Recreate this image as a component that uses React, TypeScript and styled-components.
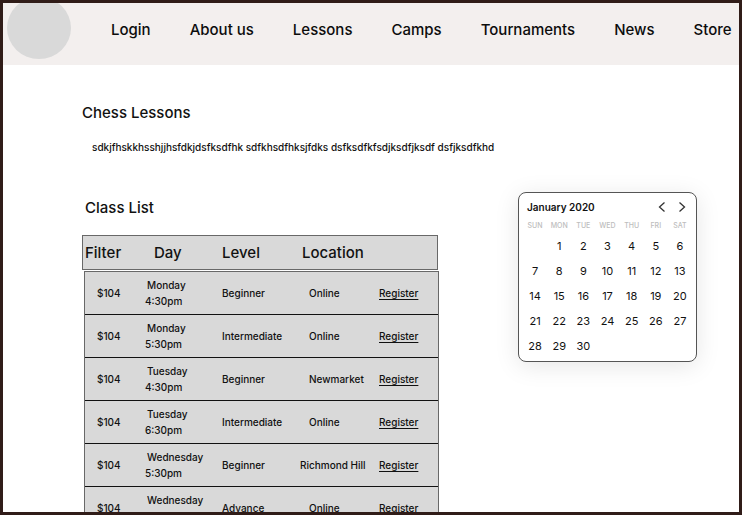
import React from "react";
import styled, { createGlobalStyle } from "styled-components";

const GlobalStyle = createGlobalStyle`
  *, *::before, *::after { box-sizing: border-box; }
  body {
    margin: 0;
    background: #fff;
    color: #111;
    font-family: Inter, "Liberation Sans", sans-serif;
    font-size: 10px;
    font-weight: 500;
    line-height: 16px;
  }
`;

const Page = styled.div`
  height: 100vh;
  overflow: hidden;
  border: 3px solid #301c18;
  background: #fff;
`;

const NavBar = styled.header`
  display: flex;
  align-items: center;
  height: 62px;
  padding-left: 4px;
  overflow: hidden;
  background: #f3efee;
`;

const Logo = styled.a`
  flex: none;
  width: 64px;
  height: 62px;
  margin: 0 40px 12px 0;
  border-radius: 50%;
  background: #d9d9d9;
`;

const NavLinks = styled.nav`
  display: flex;
  gap: 39px;
  margin-bottom: 8px;
`;

const NavLink = styled.a`
  color: #0c0c0c;
  font-size: 15px;
  line-height: 20px;
  white-space: nowrap;
  text-decoration: none;
`;

const Main = styled.main`
  padding: 38px 42px 0 79px;
`;

const Title = styled.h1`
  margin: 0;
  font-size: 15px;
  font-weight: 500;
  line-height: 20px;
`;

const Intro = styled.p`
  margin: 16px 0 0 10px;
`;

const Columns = styled.div`
  display: flex;
  justify-content: space-between;
  align-items: flex-start;
  margin-top: 37px;
`;

const ClassSection = styled.section`
  flex: 0 1 357px;
  padding-top: 6px;
`;

const SectionTitle = styled(Title).attrs({ as: "h2" })`
  margin-left: 3px;
`;

const ClassTable = styled.table`
  display: block;
  margin-top: 17px;
`;

const TableHead = styled.thead`
  display: block;
  margin-right: 1px;
  border: 1px solid #686868;
  background: #d9d9d9;
`;

const TableBody = styled.tbody`
  display: block;
  margin: 1px 0 0 2px;
  border: 1px solid #686868;
  background: #d9d9d9;
`;

const HeadRow = styled.tr`
  display: grid;
  grid-template-columns: 69px 68px 80px 1fr;
  align-items: center;
  height: 33px;
  padding-left: 2px;
`;

const HeadCell = styled.th`
  padding: 0;
  font-size: 15px;
  font-weight: 500;
  line-height: 20px;
  text-align: left;
`;

const ClassRow = styled.tr`
  display: grid;
  grid-template-columns: 48px 77px 78px 79px 1fr;
  align-items: center;
  height: 43px;
  padding-left: 12px;
  border-bottom: 1px solid #111;
`;

const Cell = styled.td<{ $wide?: boolean }>`
  padding: 0 0 0 ${(p) => (p.$wide ? 0 : 9)}px;
  white-space: nowrap;
`;

const PlainCell = styled.td`
  padding: 0;
`;

const DayName = styled.div`
  padding-left: 2px;
`;

const RegisterLink = styled.a`
  color: inherit;
  text-decoration: underline;
  text-decoration-skip-ink: none;
  text-underline-offset: 2px;
`;

const CalendarCard = styled.section`
  flex: none;
  width: 179px;
  padding: 5px 4px 2px;
  border: 1px solid #555;
  border-radius: 8px;
  background: #fff;
  box-shadow: 0 4px 24px rgba(0, 0, 0, 0.1);
`;

const CalendarHeader = styled.div`
  display: flex;
  align-items: center;
  height: 18px;
  padding: 0 0 0 4px;
`;

const Month = styled.h2`
  flex: 1;
  margin: 0;
  font-size: 10px;
  font-weight: 600;
  line-height: 18px;
`;

const ArrowButton = styled.button`
  display: flex;
  align-items: center;
  justify-content: center;
  width: 20px;
  height: 18px;
  padding: 0;
  border: 0;
  background: none;
  color: #333;
`;

const MonthGrid = styled.table`
  width: 100%;
  border-collapse: collapse;
  table-layout: fixed;
`;

const Weekday = styled.th`
  height: 18px;
  padding: 2px 0 0;
  color: #bdbdbd;
  font-size: 7px;
  font-weight: 500;
  line-height: 16px;
`;

const DateCell = styled.td`
  height: 25px;
  padding: 0;
  font-size: 11px;
  font-weight: 400;
  line-height: 24px;
  text-align: center;
  vertical-align: top;
`;

const links = ["Login", "About us", "Lessons", "Camps", "Tournaments", "News", "Store"];

const classes = [
  ["Monday", "4:30pm", "Beginner", "Online"],
  ["Monday", "5:30pm", "Intermediate", "Online"],
  ["Tuesday", "4:30pm", "Beginner", "Newmarket"],
  ["Tuesday", "6:30pm", "Intermediate", "Online"],
  ["Wednesday", "5:30pm", "Beginner", "Richmond Hill"],
  ["Wednesday", "6:30pm", "Advance", "Online"],
];

const weekdays = ["SUN", "MON", "TUE", "WED", "THU", "FRI", "SAT"];

function Chevron({ d }: { d: string }) {
  return (
    <svg width="8" height="12" viewBox="0 0 8 12" fill="none" stroke="currentColor" strokeWidth="1.3" aria-hidden="true">
      <path d={d} />
    </svg>
  );
}

function Calendar() {
  return (
    <CalendarCard aria-label="Calendar">
      <CalendarHeader>
        <Month>January 2020</Month>
        <ArrowButton type="button" aria-label="Previous month">
          <Chevron d="M6.5 1.5 1.5 6l5 4.5" />
        </ArrowButton>
        <ArrowButton type="button" aria-label="Next month">
          <Chevron d="M1.5 1.5 6.5 6l-5 4.5" />
        </ArrowButton>
      </CalendarHeader>
      <MonthGrid>
        <thead>
          <tr>
            {weekdays.map((d) => (
              <Weekday key={d} scope="col">{d}</Weekday>
            ))}
          </tr>
        </thead>
        <tbody>
          {[0, 1, 2, 3, 4].map((week) => (
            <tr key={week}>
              {weekdays.map((d, i) => {
                const date = week * 7 + i;
                return <DateCell key={d}>{date >= 1 && date <= 30 ? date : null}</DateCell>;
              })}
            </tr>
          ))}
        </tbody>
      </MonthGrid>
    </CalendarCard>
  );
}

export default function App() {
  return (
    <>
      <GlobalStyle />
      <Page>
        <NavBar>
          <Logo href="#" aria-label="Home" />
          <NavLinks>
            {links.map((l) => (
              <NavLink key={l} href="#">{l}</NavLink>
            ))}
          </NavLinks>
        </NavBar>
        <Main>
          <Title>Chess Lessons</Title>
          <Intro>sdkjfhskkhsshjjhsfdkjdsfksdfhk sdfkhsdfhksjfdks dsfksdfkfsdjksdfjksdf dsfjksdfkhd</Intro>
          <Columns>
            <ClassSection>
              <SectionTitle>Class List</SectionTitle>
              <ClassTable>
                <TableHead>
                  <HeadRow>
                    {["Filter", "Day", "Level", "Location"].map((h) => (
                      <HeadCell key={h} scope="col">{h}</HeadCell>
                    ))}
                  </HeadRow>
                </TableHead>
                <TableBody>
                  {classes.map(([day, time, level, place]) => (
                    <ClassRow key={day + time}>
                      <PlainCell>$104</PlainCell>
                      <PlainCell>
                        <DayName>{day}</DayName>
                        <div>{time}</div>
                      </PlainCell>
                      <PlainCell>{level}</PlainCell>
                      <Cell $wide={place.length > 10}>{place}</Cell>
                      <PlainCell>
                        <RegisterLink href="#">Register</RegisterLink>
                      </PlainCell>
                    </ClassRow>
                  ))}
                </TableBody>
              </ClassTable>
            </ClassSection>
            <Calendar />
          </Columns>
        </Main>
      </Page>
    </>
  );
}
